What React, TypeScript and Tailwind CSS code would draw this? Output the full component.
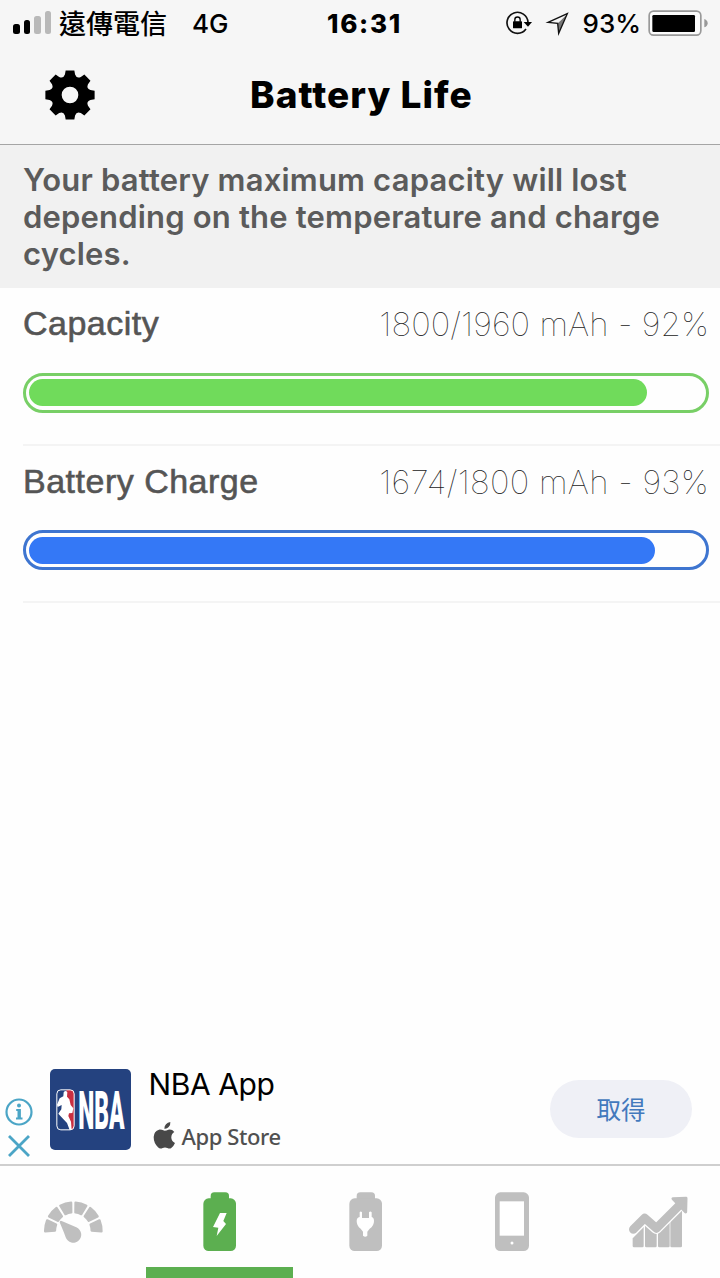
import React from "react";

const polar = (cx: number, cy: number, r: number, deg: number) => {
  const a = (deg * Math.PI) / 180;
  return `${(cx + r * Math.cos(a)).toFixed(2)},${(cy + r * Math.sin(a)).toFixed(2)}`;
};

function GearIcon() {
  let d = "";
  for (let i = 0; i < 8; i++) {
    const a = i * 45 - 90;
    d += `${i === 0 ? "M" : "L"}${polar(75, 75, 75, a - 10)} L${polar(75, 75, 75, a + 10)} L${polar(75, 75, 63, a + 14)} Q${polar(75, 75, 52, a + 22.5)} ${polar(75, 75, 63, a + 31)} `;
  }
  return (
    <svg className="h-[50px] w-[50px]" viewBox="0 0 150 150">
      <path d={`${d}Z M100 75a25 25 0 1 0-50 0a25 25 0 1 0 50 0Z`} fillRule="evenodd" />
    </svg>
  );
}

function SignalBars() {
  return (
    <div className="mb-[2px] flex h-[23px] w-[38px] items-end gap-[4px]">
      <i className="h-[10px] w-[6.5px] rounded-[2.5px] bg-black" />
      <i className="h-[14px] w-[6.5px] rounded-[2.5px] bg-black" />
      <i className="h-[18px] w-[6.5px] rounded-[2.5px] bg-[#b9b9b9]" />
      <i className="h-[23px] w-[6.5px] rounded-[2.5px] bg-[#b9b9b9]" />
    </div>
  );
}

function StatusIcons() {
  return (
    <svg className="h-[26px] w-[64px]" viewBox="78 29 192 78" fill="none">
      <path d="M141 86A31.500 31.500 0 1 1 147 66" stroke="#111" strokeWidth="5" />
      <path d="M134 65H159L147 79Z" fill="#000" />
      <rect x="102" y="63" width="27" height="21" rx="2" fill="#000" />
      <path d="M107.500 64V58a8 8 0 0 1 16 0V64" stroke="#000" strokeWidth="4" />
      <path d="M236 69L265 40L239 99Z" fill="#777" />
      <path d="M207 66L265 40L236 69Z" fill="#f7f7f7" />
      <path d="M207 66L265 40L239 99L236 69Z" stroke="#111" strokeWidth="4" />
    </svg>
  );
}

function BatteryStatus() {
  return (
    <svg className="h-[26px] w-[60px]" viewBox="504 29 180 78">
      <rect x="507.500" y="32.500" width="155" height="72" rx="13" fill="#fbfbfb" stroke="#999" strokeWidth="5" />
      <rect x="517" y="44" width="128" height="51" rx="4" />
      <path d="M673 56Q683 60 683 68.500Q683 77 673 81Z" fill="#999" />
    </svg>
  );
}

function Meter({ label, value, spacing, width, border, fill }: { label: string; value: string; spacing: string; width: string; border: string; fill: string }) {
  return (
    <section className="ml-[23px] h-[157.500px] border-b-2 border-[#f4f4f4] pr-[11px]">
      <div className="flex h-[84.500px] items-start justify-between pt-[15px] leading-[40px] whitespace-nowrap">
        <h2 className="font-['Liberation_Sans',sans-serif] text-[34px] tracking-[0.5px] text-[#555] [-webkit-text-stroke:0.6px_#555]">{label}</h2>
        <p className={`pt-px font-[Inter,sans-serif] text-[33px] font-thin text-[#222] ${spacing}`}>{value}</p>
      </div>
      <div className={`h-[40px] w-[686px] rounded-full border-3 px-[3px] py-[3.500px] ${border}`}>
        <div className={`h-full rounded-full ${fill} ${width}`} />
      </div>
    </section>
  );
}

function GaugeIcon() {
  const segs = [0, 1, 2, 3, 4, 5].map((i) => {
    const a = 178.5 + i * 32;
    const b = a + 23;
    return `M${polar(88, 109, 84.5, a)} A84.5 84.5 0 0 1 ${polar(88, 109, 84.5, b)} L${polar(88, 109, 55, b - 2)} A55 55 0 0 0 ${polar(88, 109, 55, a + 2)}Z`;
  });
  return (
    <svg className="mt-[34.5px] h-[43px] w-[59px]" viewBox="0 20 177 129" fill="#bfbfbf">
      {segs.map((d) => (
        <path key={d} d={d} stroke="#bfbfbf" strokeWidth="7" strokeLinejoin="round" />
      ))}
      <path d="M47 84Q47 78 53 80L97 99A24 24 0 1 1 65 129Q61 117 47 84Z" />
    </svg>
  );
}

function BatteryShape({ color, children }: { color: string; children: React.ReactNode }) {
  return (
    <svg className="mt-[26px] h-[60px] w-[34px]" viewBox="-1 -1 102 180">
      <g fill={color}>
        <rect x="22" y="0" width="55" height="40" rx="11" />
        <rect x="0" y="18" width="98" height="158" rx="16" />
      </g>
      <g fill="white">{children}</g>
    </svg>
  );
}

function PhoneIcon() {
  return (
    <svg className="mt-[26px] h-[60px] w-[36px]" viewBox="-3 -1 108 180">
      <rect width="102" height="176" rx="16" fill="#bfbfbf" />
      <rect x="14" y="27" width="73" height="103" fill="#fff" />
      <circle cx="51" cy="152" r="4.500" fill="#fff" />
    </svg>
  );
}

function ChartIcon() {
  return (
    <svg className="mt-[29px] h-[54px] w-[60px]" viewBox="207 104 180 162">
      <g fill="#bfbfbf" stroke="#bfbfbf" strokeWidth="8" strokeLinejoin="round">
        <path d="M222 208L247 184V257H222Z" />
        <path d="M259 184L286 203V257H259Z" />
        <path d="M298 204L325 175V257H298Z" />
        <path d="M335 165L362 140V257H335Z" />
      </g>
      <path d="M206 222L254 173L289 204L375 118" fill="none" stroke="#fefefe" strokeWidth="34" strokeLinejoin="round" />
      <path d="M220 207L254 173L289 204L362 131" fill="none" stroke="#bfbfbf" strokeWidth="26" strokeLinecap="round" strokeLinejoin="round" />
      <path d="M339 115L378 114L377 155Z" fill="#bfbfbf" stroke="#bfbfbf" strokeWidth="9" strokeLinejoin="round" />
    </svg>
  );
}

function NbaIcon() {
  return (
    <svg className="h-[81px] w-[81px]" viewBox="149 56 243 243">
      <defs>
        <clipPath id="badge"><rect x="169" y="118" width="53" height="121" rx="12" /></clipPath>
      </defs>
      <rect x="149" y="56" width="243" height="243" rx="15" fill="#24427f" />
      <g clipPath="url(#badge)">
        <rect x="169" y="118" width="53" height="121" fill="#24427f" />
        <path d="M198 118H222V239H211L198 195Z" fill="#c92f41" />
        <path d="M190 126Q196 118 201 126L200 139L207 147L211 164L219 174L216 188L206 189L204 197L212 214L214 239H208L200 218L181 198L174 190L183 177L184 164L172 170L170 163L178 144L189 138Z" fill="#fff" />
      </g>
      <rect x="169.500" y="118.500" width="52" height="120" rx="12" fill="none" stroke="#fff" strokeWidth="3" />
      <text transform="translate(234 235) scale(0.42 1)" fontFamily="Roboto, sans-serif" fontWeight="900" fontSize="163" fill="#fff">NBA</text>
    </svg>
  );
}

function AppleLogo() {
  return (
    <svg className="h-[27px] w-[23px]" viewBox="457 217 69 81" fill="#484848">
      <path d="M509 217Q510 226 504 232Q499 238 491 237Q491 229 496 224Q501 218 509 217Z" />
      <path d="M492 243Q497 243 503 240Q514 238 521 247Q511 253 512 265Q513 275 523 280Q519 290 511 296Q506 298 500 295Q493 292 486 295Q478 299 472 293Q459 280 459 262Q460 244 475 240Q480 239 492 243Z" />
    </svg>
  );
}

function AdBanner() {
  return (
    <aside className="flex h-[104px] items-start">
      <div className="flex w-[49.5px] flex-col items-center gap-[9px] pt-[38px] pr-[12px]">
        <svg className="h-[28px] w-[28px]" viewBox="0 0 28 28" fill="none" stroke="#4ba5c6">
          <circle cx="14" cy="14" r="12.500" strokeWidth="2.200" />
          <circle cx="14" cy="7.500" r="2" fill="#4ba5c6" stroke="none" />
          <path d="M14.200 11V20.500" strokeWidth="3.400" />
          <path d="M11.200 12H14M11 20.500H17.500" strokeWidth="1.800" />
        </svg>
        <svg className="h-[22px] w-[22px]" viewBox="0 0 22 22" stroke="#4ba5c6" strokeWidth="2.800">
          <path d="M1 1L21 21M21 1L1 21" />
        </svg>
      </div>
      <div className="pt-[8.500px]"><NbaIcon /></div>
      <div className="flex flex-col pt-[4px] pl-[18px] whitespace-nowrap">
        <div className="h-[40px] font-[Inter,sans-serif] text-[30px] leading-[40px] tracking-[-0.4px] text-black">NBA App</div>
        <div className="mt-[15px] flex items-center gap-[6px] pl-[4px]">
          <AppleLogo />
          <span className="pt-[2px] font-['Noto_Sans',sans-serif] text-[22px] leading-[30px] font-medium tracking-[-0.4px] text-[#505050]">App Store</span>
        </div>
      </div>
      <button className="mt-[20px] mr-[28px] ml-auto h-[58px] w-[142px] rounded-full bg-[#eff0f6] font-['Noto_Sans_CJK_TC',sans-serif] text-[24.500px] text-[#4379bd]">取得</button>
    </aside>
  );
}

export default function App() {
  return (
    <div className="flex h-[1278px] w-[720px] flex-col overflow-hidden bg-[#fefefe]">
      <header className="h-[145px] border-b border-[#a5a5a5] bg-[#f6f6f6] text-black">
        <div className="grid h-[46px] grid-cols-[327px_1fr_auto] items-center font-[Inter,sans-serif] text-[26px] whitespace-nowrap">
          <div className="flex items-center pl-[13px]">
            <SignalBars />
            <span className="ml-[8px] font-['Noto_Sans_CJK_TC',sans-serif] text-[27px] leading-[46px] font-medium">遠傳電信</span>
            <span className="ml-[25px] font-medium">4G</span>
          </div>
          <div className="font-extrabold tracking-[1.7px]">16:31</div>
          <div className="flex items-center pr-[12px]">
            <StatusIcons />
            <span className="mr-[7px] ml-[13.5px] font-medium">93%</span>
            <BatteryStatus />
          </div>
        </div>
        <div className="flex h-[98px] items-center">
          <div className="w-[250px] pl-[45px]"><GearIcon /></div>
          <h1 className="font-[Inter,sans-serif] text-[37px] leading-[48px] font-extrabold tracking-[1.05px] whitespace-nowrap">Battery Life</h1>
        </div>
      </header>
      <p className="h-[143px] bg-[#f1f1f1] pt-[16px] pl-[23px] font-[Inter,sans-serif] text-[31px] leading-[37px] font-semibold tracking-[0.18px] whitespace-nowrap text-[#5b5b5b]">
        Your battery maximum capacity will lost<br />depending on the temperature and charge<br />cycles.
      </p>
      <main className="flex-1">
        <Meter label="Capacity" value="1800/1960 mAh - 92%" spacing="tracking-[0.05px]" width="w-[618px]" border="border-[#78cf66]" fill="bg-[#70db5b]" />
        <Meter label="Battery Charge" value="1674/1800 mAh - 93%" spacing="tracking-[0.25px]" width="w-[626px]" border="border-[#3e75d0]" fill="bg-[#3478f6]" />
      </main>
      <AdBanner />
      <nav className="h-[114px] overflow-hidden border-t-2 border-[#cfcfcf]">
        <div className="flex w-[732px]">
          <div className="flex h-[112px] w-[146.400px] flex-col items-center"><GaugeIcon /></div>
          <div className="flex h-[112px] w-[146.400px] flex-col items-center">
            <BatteryShape color="#5caf50"><path d="M50 62H70L60 86L68 95L40 131L45 106L29 104Z" /></BatteryShape>
            <div className="mt-auto h-[11px] w-full bg-[#5caf50]" />
          </div>
          <div className="flex h-[112px] w-[146.400px] flex-col items-center">
            <BatteryShape color="#bfbfbf"><path d="M31 60Q34 55 38 60V77H59V60Q63 55 67 60V74Q74 76 74 86Q74 101 61 109L54 118V130Q48 136 41 130V118L34 109Q22 101 22 86Q22 76 31 74Z" /></BatteryShape>
          </div>
          <div className="flex h-[112px] w-[146.400px] flex-col items-center"><PhoneIcon /></div>
          <div className="flex h-[112px] w-[146.400px] flex-col items-center"><ChartIcon /></div>
        </div>
      </nav>
    </div>
  );
}
